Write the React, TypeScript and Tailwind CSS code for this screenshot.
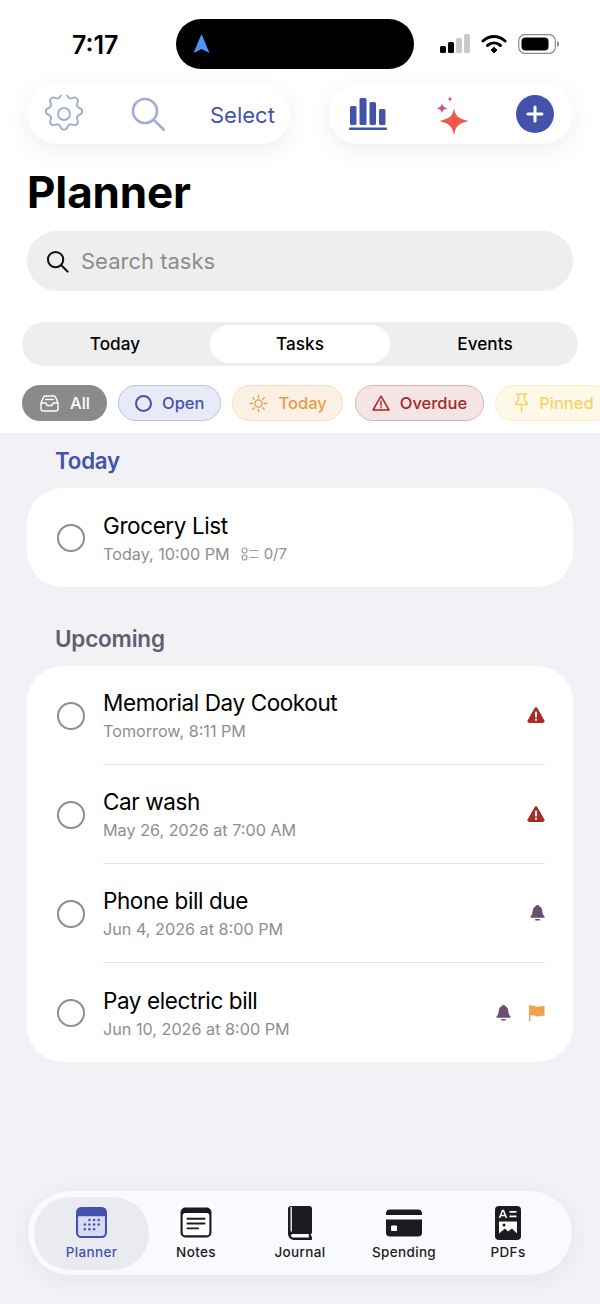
import React from "react";

const F = '"Inter","Liberation Sans",sans-serif';

function Gear() {
  return (
    <svg width="38" height="38" viewBox="2.5 2.5 19 19" fill="none" stroke="#a4abd8" strokeWidth="0.95" strokeLinecap="round" strokeLinejoin="round">
      <path d="M10.3 2.9a1.75 1.75 0 0 1 3.4 0 1.75 1.75 0 0 0 2.6 1.08 1.75 1.75 0 0 1 2.4 2.4 1.75 1.75 0 0 0 1.08 2.6 1.75 1.75 0 0 1 0 3.4 1.75 1.75 0 0 0-1.08 2.6 1.75 1.75 0 0 1-2.4 2.4 1.75 1.75 0 0 0-2.6 1.08 1.75 1.75 0 0 1-3.4 0 1.75 1.75 0 0 0-2.6-1.08 1.75 1.75 0 0 1-2.4-2.4 1.75 1.75 0 0 0-1.08-2.6 1.75 1.75 0 0 1 0-3.4 1.75 1.75 0 0 0 1.08-2.6 1.75 1.75 0 0 1 2.4-2.4 1.75 1.75 0 0 0 2.6-1.08Z" />
      <circle cx="12" cy="12" r="3" />
    </svg>
  );
}

function Search({ size, color, sw }: { size: number; color: string; sw: number }) {
  return (
    <svg width={size} height={size} viewBox="0 0 24 24" fill="none" stroke={color} strokeWidth={sw} strokeLinecap="round">
      <circle cx="10" cy="10" r="8" />
      <path d="M16 16l6.5 6.5" />
    </svg>
  );
}

function Bars() {
  return (
    <svg width="38" height="34" viewBox="0 0 38 34" fill="#4353ab">
      <rect x="1" y="9" width="6.5" height="19" rx="1.5" />
      <rect x="10.5" y="1" width="7" height="27" rx="1.5" />
      <rect x="20.5" y="5" width="6.5" height="23" rx="1.5" />
      <rect x="30" y="12" width="6.5" height="16" rx="1.5" />
      <rect x="0" y="30.5" width="38" height="2.5" rx="1" />
    </svg>
  );
}

function Sparkle() {
  return (
    <svg width="34" height="40" viewBox="0 0 34 40">
      <path d="M19 12c1 7.500 4 10.500 14.500 13-10 2.500-13 5-14.500 14.500-1.500-9.500-5-12-14.500-14.500 10.500-2.500 13.500-5.500 14.500-13Z" fill="#f0584e" />
      <path d="M7 7c.6 3.300 1.600 4.300 5.500 5.300-3.900 1-4.900 2-5.500 5.300-.6-3.300-1.600-4.300-5.500-5.300C5.400 11.300 6.400 10.300 7 7Z" fill="#d64a92" />
      <path d="M15 0c.3 2 .8 2.600 3 3-2.200.4-2.700 1-3 3-.3-2-.8-2.600-3-3 2.200-.4 2.700-1 3-3Z" fill="#d64a92" />
    </svg>
  );
}

function Inbox() {
  return (
    <svg width="19" height="17" viewBox="0 0 19 17" fill="none" stroke="#fff" strokeWidth="1.4" strokeLinejoin="round">
      <path d="M1 8l2.500-6a1.500 1.500 0 0 1 1.400-1h9.200a1.500 1.500 0 0 1 1.400 1L18 8v6a2 2 0 0 1-2 2H3a2 2 0 0 1-2-2V8Z" />
      <path d="M1 8h5l1 2.500h5L13 8h5" />
      <path d="M5 4.500h9" />
    </svg>
  );
}

function Sun() {
  return (
    <svg width="19" height="19" viewBox="0 0 24 24" fill="none" stroke="#ea9a4d" strokeWidth="1.7" strokeLinecap="round">
      <circle cx="12" cy="12" r="4.500" />
      <path d="M12 1.500v3M12 19.500v3M1.500 12h3M19.500 12h3M4.600 4.600l2.100 2.100M17.300 17.300l2.100 2.100M4.600 19.400l2.100-2.100M17.300 6.700l2.100-2.100" />
    </svg>
  );
}

function TriangleOutline() {
  return (
    <svg width="18" height="16" viewBox="0 0 18 16" fill="none">
      <path d="M9 1.200 17 15H1L9 1.200Z" stroke="#a32a2a" strokeWidth="1.5" strokeLinejoin="round" />
      <path d="M9 6v4.500" stroke="#a32a2a" strokeWidth="1.4" strokeLinecap="round" />
      <circle cx="9" cy="12.600" r=".9" fill="#a32a2a" />
    </svg>
  );
}

function Pin() {
  return (
    <svg width="15" height="20" viewBox="0 0 15 20" fill="none" stroke="#f6d365" strokeWidth="1.5" strokeLinejoin="round" strokeLinecap="round">
      <path d="M2.500 1h10M4.500 1v5.500L1.500 11.500h12l-3-5V1M7.500 11.500V19" />
    </svg>
  );
}

function Circle() {
  return <span className="block h-[28px] w-[28px] shrink-0 rounded-full border-[2.5px] border-[#8e8e90] bg-white" />;
}

function Warn() {
  return (
    <svg width="18" height="16" viewBox="0 0 18 16">
      <path d="M7.500 1.200a1.700 1.700 0 0 1 3 0l6.900 12.200a1.700 1.700 0 0 1-1.500 2.500H2.100A1.700 1.700 0 0 1 .6 13.400L7.500 1.200Z" fill="#a92b2a" />
      <rect x="8" y="4.500" width="2" height="6" rx="1" fill="#fff" />
      <circle cx="9" cy="12.700" r="1.100" fill="#fff" />
    </svg>
  );
}

function Bell() {
  return (
    <svg width="15" height="16" viewBox="0 0 15 16" fill="#6a4f70">
      <path d="M7.500 0C9 0 9.300.8 9.500 1.400 11.300 2 12 3.500 12.200 5.500c.3 3 .8 4.400 2.300 6 .4.600.2 1.200-.6 1.200H1.100c-.8 0-1-.6-.6-1.200 1.500-1.600 2-3 2.300-6C3 3.500 3.700 2 5.500 1.400 5.700.8 6 0 7.500 0Z" />
      <rect x="5" y="14" width="5" height="1.500" rx=".75" />
    </svg>
  );
}

function Flag() {
  return (
    <svg width="16" height="16" viewBox="0 0 16 16">
      <path d="M0 0h1.500v16H0z" fill="#f0a04f" />
      <path d="M1 .8C4 -.5 6 2 9.500 1.600 11.500 1.400 13.500.6 15.500 1v10c-2.500-.5-4 .5-6 .5-3 0-5.500-2-8.500-.8V.8Z" fill="#f0a04f" />
    </svg>
  );
}

function SubtaskIcon() {
  return (
    <svg width="18" height="14" viewBox="0 0 18 14" fill="none" stroke="#9b9b9f" strokeWidth="1.200" strokeLinecap="round">
      <circle cx="3.500" cy="3.500" r="2.500" />
      <circle cx="3.500" cy="10.500" r="2.500" />
      <path d="M9 3.500h8M9 10.500h8" />
    </svg>
  );
}

function NavPlanner() {
  return (
    <svg width="31" height="31" viewBox="0 0 30 30">
      <rect x="1" y="1" width="28" height="28" rx="4" fill="#d9dcef" stroke="#4353ab" strokeWidth="2" />
      <path d="M1 5a4 4 0 0 1 4-4h20a4 4 0 0 1 4 4v4H1V5Z" fill="#4353ab" />
      {[[13, 12.500], [17.500, 12.500], [22, 12.500], [8.500, 17], [13, 17], [17.500, 17], [22, 17], [8.500, 21.500], [13, 21.500], [17.500, 21.500]].map(([x, y], i) => (
        <circle key={i} cx={x} cy={y} r="1.200" fill="#4353ab" />
      ))}
    </svg>
  );
}

function NavNotes() {
  return (
    <svg width="32" height="31" viewBox="0 0 30 29">
      <rect x="0.500" y="0.500" width="29" height="28" rx="4.500" fill="#1c1c20" />
      <rect x="2.500" y="5.500" width="25" height="21" rx="2.500" fill="#fff" />
      <path d="M7 11h16M7 15.500h16M7 20h10" stroke="#1c1c20" strokeWidth="1.800" strokeLinecap="round" />
    </svg>
  );
}

function NavJournal() {
  return (
    <svg width="26" height="34" viewBox="0 0 26 34">
      <path d="M4 0h18a3 3 0 0 1 3 3v23.500c0 1-.8 1.200-1.200 1.800-.4.700 1.200 2.200 1.200 3.700v1c0 .6-.4 1-1 1H7a6 6 0 0 1-6-6V3a3 3 0 0 1 3-3Z" fill="#1c1c20" />
      <path d="M4.200 1.500V25" stroke="#fff" strokeWidth="1.300" strokeLinecap="round" />
      <path d="M4 29.500c0-.8.800-1.500 2-1.500h16c-.5 1-.4 2.500.3 3.500H6c-1.200 0-2-.8-2-2Z" fill="#fff" />
    </svg>
  );
}

function NavCard() {
  return (
    <svg width="36" height="28" viewBox="0 0 36 28">
      <path d="M0 6V4.500A4 4 0 0 1 4 .5h28a4 4 0 0 1 4 4V6H0Z" fill="#1c1c20" />
      <path d="M0 10.500h36v13a4 4 0 0 1-4 4H4a4 4 0 0 1-4-4v-13Z" fill="#1c1c20" />
      <rect x="5" y="16.500" width="6" height="5.500" rx="1" fill="#fff" />
    </svg>
  );
}

function NavPdf() {
  return (
    <svg width="26" height="34" viewBox="0 0 26 34">
      <rect width="26" height="34" rx="4" fill="#1c1c20" />
      <path d="M4.500 12 7.500 4.500h1L11.500 12M5.700 9.500h4.600" stroke="#fff" strokeWidth="1.500" fill="none" />
      <path d="M14.500 5.800h7M14.500 10.300h7" stroke="#fff" strokeWidth="1.800" />
      <path d="M4 15.500h18v12l-5-5-4 3-3-3-6 5v-12Z" fill="#fff" />
      <circle cx="9" cy="19" r="1.500" fill="#1c1c20" />
    </svg>
  );
}

function Task({ title, sub, right, last }: { title: string; sub: React.ReactNode; right?: React.ReactNode; last?: boolean }) {
  return (
    <div className="flex items-center pl-[29.500px] pr-[28px]">
      <Circle />
      <div className={`ml-[18.500px] flex h-[99px] flex-1 items-center justify-between ${last ? "" : "border-b border-[#e4e4e6]"}`}>
        <div className="flex flex-col">
          <span className="text-[22.500px] leading-[30px] tracking-[-0.4px] text-black">{title}</span>
          <span className="mt-[2px] flex items-center text-[16.200px] leading-[22px] text-[#8e8e92]">{sub}</span>
        </div>
        {right && <div className="flex items-center gap-[18px]">{right}</div>}
      </div>
    </div>
  );
}

function NavItem({ label, icon, active }: { label: string; icon: React.ReactNode; active?: boolean }) {
  return (
    <div className={`flex h-[73px] flex-col items-center rounded-[36px] pt-[8px] ${active ? "w-[115px] bg-[#eaeaf1]" : "w-[94px]"}`}>
      <div className="flex h-[36px] items-center justify-center">{icon}</div>
      <span className={`mt-[3px] text-[13.500px] font-[450] leading-[16px] tracking-[0.35px] ${active ? "text-[#4353ab]" : "text-[#1c1c20]"}`}>{label}</span>
    </div>
  );
}

function Chip({ className, icon, label }: { className: string; icon: React.ReactNode; label: string }) {
  return (
    <div className={`flex h-[36px] shrink-0 items-center rounded-full text-[16.500px] font-[550] ${className}`}>
      {icon}
      <span>{label}</span>
    </div>
  );
}

export default function App() {
  return (
    <div className="flex h-[1304px] w-[600px] flex-col overflow-hidden bg-[#f1f1f6]" style={{ fontFamily: F }}>
      <div className="flex h-[433px] shrink-0 flex-col bg-white">
        <div className="flex h-[84px] shrink-0 items-start">
          <span className="ml-[72px] mt-[30px] w-[104px] text-[25px] font-semibold leading-[30px] text-black">7:17</span>
          <div className="mt-[19px] flex h-[50px] w-[238px] items-center rounded-full bg-black pl-[17px]">
            <svg width="17" height="20" viewBox="0 0 17 20"><path d="M8.500 0 16.500 19 8.500 15 .5 19Z" fill="#4d94f5" /></svg>
          </div>
          <div className="ml-[26px] mt-[34px] flex items-center gap-[11px]">
            <svg width="30" height="20" viewBox="0 0 30 20">
              <rect x="0" y="12" width="6" height="7" rx="1.500" fill="#000" />
              <rect x="8" y="8" width="6" height="11" rx="1.500" fill="#000" />
              <rect x="16" y="4" width="6" height="15" rx="1.500" fill="#c9c9c9" />
              <rect x="24" y="0" width="6" height="19" rx="1.500" fill="#c9c9c9" />
            </svg>
            <svg width="26" height="20" viewBox="0 0 26 20" fill="none" stroke="#000" strokeLinecap="round">
              <path d="M2 7c6.500-6 15.500-6 22 0" strokeWidth="3" />
              <path d="M6.500 11.500c4-3.500 9-3.500 13 0" strokeWidth="3" />
              <path d="M13 13.500 10 16l3 3 3-3-3-2.500Z" fill="#000" strokeWidth="1" />
            </svg>
            <svg width="42" height="20" viewBox="0 0 42 20">
              <rect x=".7" y=".7" width="36.600" height="18.600" rx="6" fill="none" stroke="#8a8a8a" strokeWidth="1.200" />
              <rect x="3.500" y="3.500" width="27" height="13" rx="4" fill="#000" />
              <path d="M39 7c1.500.5 2 1.500 2 3s-.5 2.500-2 3V7Z" fill="#8a8a8a" />
            </svg>
          </div>
        </div>

        <div className="flex h-[60px] shrink-0 justify-between px-[27px]">
          <div className="flex w-[263px] items-center rounded-full bg-white pl-[18px] shadow-[0_6px_24px_rgba(0,0,0,0.07)]">
            <Gear />
            <span className="ml-[47px]"><Search size={36} color="#a4abd8" sw={1.700} /></span>
            <span className="ml-[44px] mt-[2px] text-[22px] leading-none text-[#4353ab]">Select</span>
          </div>
          <div className="flex w-[244px] items-center rounded-full bg-white pl-[20px] shadow-[0_6px_24px_rgba(0,0,0,0.07)]">
            <Bars />
            <span className="ml-[48px] mt-[3px]"><Sparkle /></span>
            <span className="ml-[47px] flex h-[38px] w-[38px] items-center justify-center rounded-full bg-[#4353ab]">
              <svg width="18" height="18" viewBox="0 0 18 18"><path d="M9 2v14M2 9h14" stroke="#fff" strokeWidth="3" strokeLinecap="round" /></svg>
            </span>
          </div>
        </div>

        <h1 className="ml-[27px] mt-[20px] text-[44px] font-bold leading-[56px] tracking-[-0.15px] text-black">Planner</h1>

        <div className="mx-[27px] mt-[11px] flex h-[60px] shrink-0 items-center rounded-full bg-[#eeeeee] pl-[19px]">
          <Search size={23} color="#111" sw={2.100} />
          <span className="ml-[12px] text-[22px] text-[#8c8c8e]">Search tasks</span>
        </div>

        <div className="mx-[22px] mt-[31px] flex h-[44px] shrink-0 items-center justify-between rounded-full bg-[#eeeeee] px-[3px] text-[17.200px] font-[450] text-black">
          <div className="flex h-[38px] w-[180px] items-center justify-center">Today</div>
          <div className="flex h-[38px] w-[180px] items-center justify-center rounded-full bg-white">Tasks</div>
          <div className="flex h-[38px] w-[180px] items-center justify-center">Events</div>
        </div>

        <div className="ml-[22px] mt-[19px] flex gap-[11px]">
          <Chip className="gap-[11px] bg-[#8a8a8a] pl-[18px] pr-[17px] text-white" icon={<Inbox />} label="All" />
          <Chip className="gap-[10px] border border-[#b9c0e4] bg-[#e8ebf7] pl-[16px] pr-[16px] text-[#4353ab]" icon={<span className="block h-[17px] w-[17px] rounded-full border-[2px] border-[#4353ab]" />} label="Open" />
          <Chip className="gap-[10px] border border-[#f5dcc0] bg-[#fdf1e4] pl-[16px] pr-[15px] text-[#ea9a4d]" icon={<Sun />} label="Today" />
          <Chip className="ml-px gap-[10px] border border-[#dcb4b4] bg-[#f5e4e4] pl-[16px] pr-[16px] text-[#a32a2a]" icon={<TriangleOutline />} label="Overdue" />
          <Chip className="gap-[10px] border border-[#fbeec4] bg-[#fef9e6] pl-[18px] pr-[16px] text-[#f6d365]" icon={<Pin />} label="Pinned" />
        </div>
      </div>

      <div className="flex flex-1 flex-col px-[27px]">
        <h2 className="ml-[28px] mt-[12px] text-[22.300px] font-semibold leading-[31px] tracking-[-0.2px] text-[#4353ab]">Today</h2>
        <div className="mt-[12px] rounded-[36px] bg-white">
          <Task
            title="Grocery List"
            last
            sub={
              <>
                <span>Today, 10:00 PM</span>
                <span className="ml-[11px] flex items-center gap-[5px] text-[15px]"><SubtaskIcon />0/7</span>
              </>
            }
          />
        </div>
        <h2 className="ml-[28px] mt-[36px] text-[22.500px] font-semibold leading-[31px] tracking-[-0.2px] text-[#5f5f70]">Upcoming</h2>
        <div className="mt-[12px] rounded-[36px] bg-white">
          <Task title="Memorial Day Cookout" sub="Tomorrow, 8:11 PM" right={<Warn />} />
          <Task title="Car wash" sub="May 26, 2026 at 7:00 AM" right={<Warn />} />
          <Task title="Phone bill due" sub="Jun 4, 2026 at 8:00 PM" right={<Bell />} />
          <Task title="Pay electric bill" sub="Jun 10, 2026 at 8:00 PM" last right={<><Bell /><Flag /></>} />
        </div>

        <div className="mb-[29px] ml-px mt-auto flex h-[84px] w-[544px] items-center rounded-full bg-[#fafafe] pl-[6px] shadow-[0_4px_24px_rgba(0,0,0,0.06)]">
          <NavItem label="Planner" active icon={<NavPlanner />} />
          <div className="flex gap-[10px]">
            <NavItem label="Notes" icon={<NavNotes />} />
            <NavItem label="Journal" icon={<NavJournal />} />
            <NavItem label="Spending" icon={<NavCard />} />
            <NavItem label="PDFs" icon={<NavPdf />} />
          </div>
        </div>
      </div>
    </div>
  );
}
